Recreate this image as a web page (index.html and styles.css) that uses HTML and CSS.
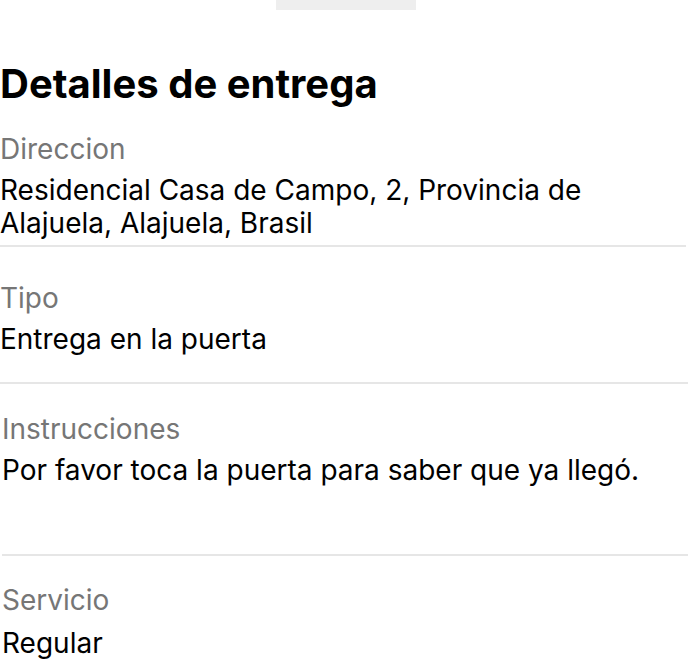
FILE: index.html
```html
<!DOCTYPE html>
<html lang="es">
<head>
<meta charset="utf-8">
<link rel="stylesheet" href="styles.css">
</head>
<body>
<div class="handle"></div>
<h1 class="title">Detalles de entrega</h1>
<section class="field field-address">
  <div class="label">Direccion</div>
  <div class="value">Residencial Casa de Campo, 2, Provincia de<br>Alajuela, Alajuela, Brasil</div>
</section>
<section class="field field-type">
  <div class="label">Tipo</div>
  <div class="value">Entrega en la puerta</div>
</section>
<section class="field field-notes">
  <div class="label">Instrucciones</div>
  <div class="value">Por favor toca la puerta para saber que ya llegó.</div>
</section>
<section class="field field-service">
  <div class="label">Servicio</div>
  <div class="value">Regular</div>
</section>
</body>
</html>
```

FILE: styles.css
```css
html, body {
  margin: 0;
  padding: 0;
  background: #fff;
}
body {
  width: 688px;
  height: 664px;
  overflow: hidden;
  font-family: Inter, "Noto Sans", sans-serif;
  color: #000;
}
.handle {
  width: 140px;
  height: 10px;
  margin-left: 276px;
  background: #eeeeee;
}
.title {
  margin: 49px 0 0 0;
  font-family: Inter, sans-serif;
  font-weight: 700;
  font-size: 40px;
  line-height: 50px;
}
.field {
  border-bottom: 2px solid #e6e6e6;
}
.label {
  font-size: 28px;
  line-height: 34px;
  margin-bottom: 8px;
  color: #767676;
}
.value {
  font-size: 28px;
  line-height: 33px;
}
.field-address {
  padding-top: 23px;
  padding-bottom: 5px;
  width: 686px;
}
.field-type {
  padding-top: 34px;
  padding-bottom: 26px;
}
.field-notes {
  margin-left: 2px;
  padding-top: 28px;
  padding-bottom: 67px;
}
.field-service {
  border-bottom: none;
  margin-left: 2px;
  padding-top: 27px;
}
.field-service .label {
  margin-bottom: 10px;
}
```
